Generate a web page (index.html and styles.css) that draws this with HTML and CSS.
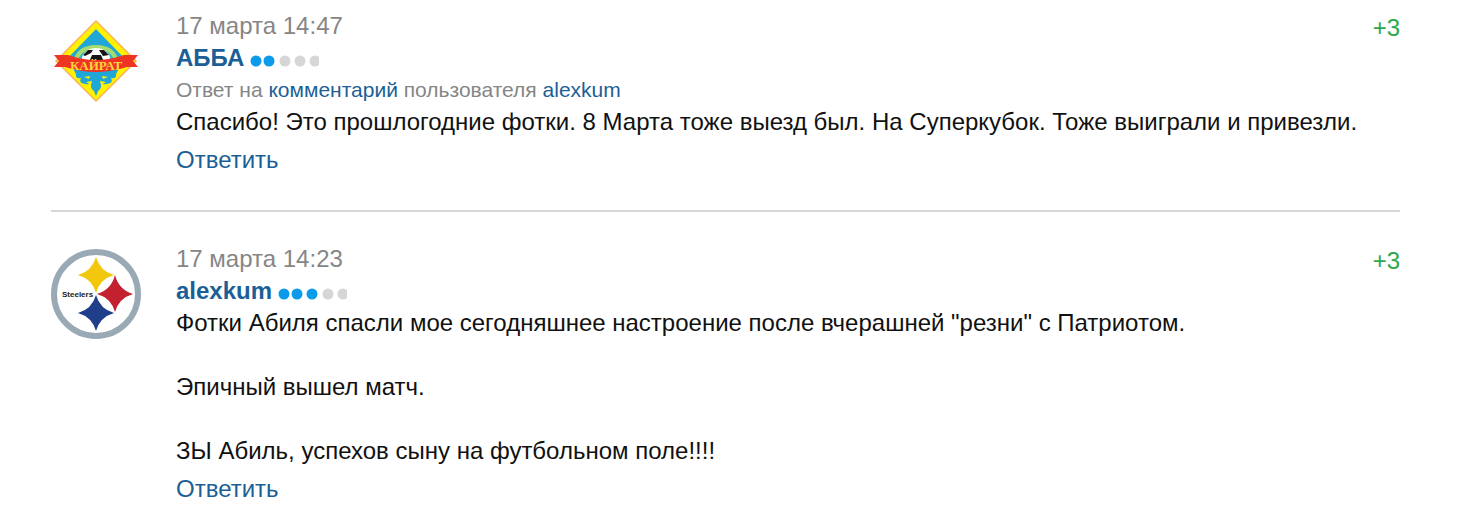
FILE: index.html
```html
<!DOCTYPE html>
<html lang="ru">
<head>
    <meta charset="UTF-8">
    <meta name="viewport" content="width=device-width, initial-scale=1.0">
    <title>Комментарии</title>
    <link rel="stylesheet" href="styles.css">
</head>
<body>
    <main class="comments">
        <article class="comment">
            <svg class="avatar" viewBox="0 0 90 90" aria-hidden="true">
                <path d="M45 5 L85 45 L45 85 L5 45Z" fill="#fff100" stroke="#fbb45c" stroke-width="1.5"/>
                <path d="M45 13 L75 44 L15 44Z" fill="#21a6d8"/>
                <path d="M22 47 Q25 29 45 29 Q65 29 68 47Z" fill="#a5dc6c"/>
                <path d="M26 47 Q29 33 45 33 Q61 33 64 47Z" fill="#35b4c4"/>
                <ellipse cx="45" cy="43" rx="14" ry="11" fill="#fff"/>
                <path d="M41 39 h9 l3 7 h-15Z M32 39 l5 -5 5 0 -2 3 -6 3Z M48 34 l5 0 5 5 -6 1Z" fill="#151515"/>
                <path d="M21 51 H69 L65 58 Q66 63 60 62 Q63 67 56 68 Q50 69 50 67 Q51 72 47 75 L45 80 L43 75 Q39 72 40 67 Q40 69 34 68 Q27 67 30 62 Q24 63 25 58Z" fill="#21a6d8"/>
                <path d="M33 61 L39 60 L38 63Z M57 61 L51 60 L52 63Z M35 66 L41 65 L40 69Z M55 66 L49 65 L50 69Z" fill="#fff100"/>
                <path d="M3 39 L17 39 Q31 44 45 44 Q59 44 73 39 L87 39 L82 45 L87 51 L76 51 Q60 56 45 56 Q30 56 14 51 L3 51 L8 45Z" fill="#ee3524"/>
                <text class="club-name" x="45" y="54" text-anchor="middle">КАЙРАТ</text>
            </svg>
            <div class="comment-body">
                <div class="comment-head">
                    <time class="date" datetime="03-17T14:47">17 марта 14:47</time>
                    <span class="rating">+3</span>
                </div>
                <div class="author">
                    <a class="author-name" href="#">АББА</a>
                    <svg class="level" viewBox="0 0 69 12" aria-hidden="true">
                        <g class="level-on">
                            <circle cx="6" cy="6" r="5.5"/>
                            <circle cx="19" cy="6" r="5.5"/>
                        </g>
                        <g class="level-off">
                            <circle cx="35" cy="6" r="5.5"/>
                            <circle cx="50" cy="6" r="5.5"/>
                            <circle cx="65" cy="6" r="5.5"/>
                        </g>
                    </svg>
                </div>
                <p class="reply-to">Ответ на <a href="#">комментарий</a> пользователя <a href="#">alexkum</a></p>
                <p class="text">Спасибо! Это прошлогодние фотки. 8 Марта тоже выезд был. На Суперкубок. Тоже выиграли и привезли.</p>
                <a class="reply" href="#">Ответить</a>
            </div>
        </article>

        <article class="comment">
            <svg class="avatar" viewBox="0 0 90 90" aria-hidden="true">
                <circle cx="45" cy="45" r="42" fill="#fff" stroke="#9aaab5" stroke-width="6"/>
                <path d="M45 8 Q49 22 63 26 Q49 30 45 44 Q41 30 27 26 Q41 22 45 8Z" fill="#f2c80f"/>
                <path d="M64 26 Q68 41 82 45 Q68 49 64 63 Q60 49 46 45 Q60 41 64 26Z" fill="#c32030"/>
                <path d="M45 46 Q49 60 63 64 Q49 68 45 82 Q41 68 27 64 Q41 60 45 46Z" fill="#1f3f8a"/>
                <text class="team-name" x="11" y="48">Steelers</text>
            </svg>
            <div class="comment-body">
                <div class="comment-head">
                    <time class="date" datetime="03-17T14:23">17 марта 14:23</time>
                    <span class="rating">+3</span>
                </div>
                <div class="author">
                    <a class="author-name" href="#">alexkum</a>
                    <svg class="level" viewBox="0 0 69 12" aria-hidden="true">
                        <g class="level-on">
                            <circle cx="6" cy="6" r="5.5"/>
                            <circle cx="19" cy="6" r="5.5"/>
                            <circle cx="34" cy="6" r="5.5"/>
                        </g>
                        <g class="level-off">
                            <circle cx="50" cy="6" r="5.5"/>
                            <circle cx="65" cy="6" r="5.5"/>
                        </g>
                    </svg>
                </div>
                <div class="text">
                    <p>Фотки Абиля спасли мое сегодняшнее настроение после вчерашней "резни" с Патриотом.</p>
                    <p>Эпичный вышел матч.</p>
                    <p>ЗЫ Абиль, успехов сыну на футбольном поле!!!!</p>
                </div>
                <a class="reply" href="#">Ответить</a>
            </div>
        </article>
    </main>
</body>
</html>
```
FILE: styles.css
```css
body {
    margin: 0;
    background-color: #fff;
    color: #111;
    font-family: "Liberation Sans", Arial, sans-serif;
    font-size: 24px;
    line-height: 32px;
}

p {
    margin: 0;
}

a {
    color: #1c5f97;
    text-decoration: none;
}

a:hover {
    text-decoration: underline;
}

.comments {
    padding: 10px 60px 0 51px;
}

.comment {
    display: flex;
    align-items: flex-start;
    gap: 35px;
}

.comment + .comment {
    margin-top: 34px;
    padding-top: 31px;
    border-top: 2px solid #d8d8d8;
}

.avatar {
    flex: none;
    width: 90px;
    height: 90px;
    margin-top: 6px;
}

.club-name {
    fill: #ffd83a;
    font-family: "Liberation Serif", serif;
    font-size: 13px;
    font-weight: bold;
}

.team-name {
    fill: #222;
    font-size: 8px;
    font-weight: bold;
}

.comment-body {
    flex: 1;
    min-width: 0;
}

.comment-head {
    display: flex;
    justify-content: space-between;
}

.date {
    color: #868686;
}

.rating {
    padding-top: 4px;
    color: #2ba84a;
    line-height: 28px;
}

.author {
    display: flex;
    align-items: center;
    gap: 6px;
}

.author-name {
    font-weight: bold;
}

.level {
    width: 69px;
    height: 12px;
    margin-top: 6px;
}

.level-on {
    fill: #0c9bea;
}

.level-off {
    fill: #d6d6d6;
}

.reply-to {
    color: #868686;
    font-size: 21px;
}

.text p + p {
    margin-top: 32px;
}

.reply {
    display: inline-block;
    margin-top: 6px;
}
```
